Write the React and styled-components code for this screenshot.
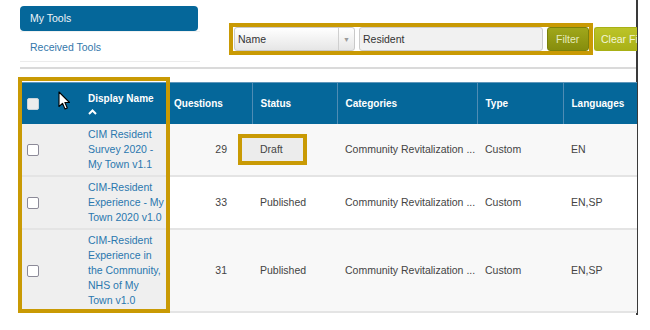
import React from "react";
import styled, { createGlobalStyle } from "styled-components";

const Global = createGlobalStyle`
  html, body { margin: 0; padding: 0; background: #fff; }
  body { font-family: "Liberation Sans", Arial, sans-serif; }
  * { box-sizing: border-box; }
`;

const GOLD = "#c99a04";
const BLUE = "#05679a";

const Frame = styled.div`
  width: 638px;
  padding-left: 20px;
  padding-bottom: 2px;
  border-right: 2px solid #3a3a3a;
`;

const TopArea = styled.div`
  display: flex;
  align-items: flex-start;
  height: 69px;
  border-bottom: 2px solid #dadada;
`;

const Nav = styled.div`
  width: 180px;
  padding-top: 6px;
  display: flex;
  flex-direction: column;
`;

const NavItem = styled.div`
  height: ${(p) => (p.$active ? 25 : 31)}px;
  line-height: ${(p) => (p.$active ? 25 : 31)}px;
  padding-left: 10px;
  font-size: 10.5px;
  border-radius: ${(p) => (p.$active ? "4px" : "0")};
  background: ${(p) => (p.$active ? BLUE : "transparent")};
  color: ${(p) => (p.$active ? "#eef4f8" : "#3377aa")};
  border-top: ${(p) => (p.$active ? "none" : "1px solid #f1f1f1")};
  border-bottom: ${(p) => (p.$active ? "none" : "1px solid #ececec")};
  width: ${(p) => (p.$active ? "178px" : "180px")};
`;

const FilterRow = styled.div`
  display: flex;
  align-items: center;
  gap: 1px;
  margin-left: 29px;
  margin-top: 23px;
`;

const Highlight = styled.div`
  display: flex;
  align-items: center;
  gap: 4px;
  border: 4px solid ${GOLD};
  padding-left: 1px;
  height: 32px;
`;

const Select = styled.div`
  width: 121px;
  height: 24px;
  display: flex;
  border: 1px solid #c9c9c9;
  border-radius: 3px;
  background: linear-gradient(#ffffff, #e6e6e6);
  font-size: 10.5px;
  color: #333;
`;

const SelectText = styled.div`
  flex: 1;
  line-height: 22px;
  padding-left: 3px;
`;

const SelectArrow = styled.div`
  width: 16px;
  border-left: 1px solid #cfcfcf;
  display: flex;
  align-items: center;
  justify-content: center;
  color: #9a9a9a;
  font-size: 7px;
`;

const Input = styled.div`
  width: 184px;
  height: 24px;
  border: 1px solid #cccccc;
  border-radius: 3px;
  background: #f1f1f1;
  line-height: 22px;
  padding-left: 3px;
  font-size: 10.5px;
  color: #333;
`;

const Button = styled.div`
  height: 24px;
  line-height: 22px;
  font-size: 10.5px;
  white-space: nowrap;
  overflow: hidden;
  width: ${(p) => p.$w}px;
  padding-left: ${(p) => p.$pl}px;
  color: ${(p) => (p.$light ? "#f2f5d6" : "#e6ebbf")};
  background: ${(p) =>
    p.$light
      ? "linear-gradient(#bcc428, #a9b117)"
      : "linear-gradient(#a0a71b, #868d0d)"};
  border: 1px solid ${(p) => (p.$light ? "#a8b015" : "#7b820b")};
  border-right-width: ${(p) => (p.$light ? "0" : "1px")};
  border-radius: ${(p) => (p.$light ? "3px 0 0 3px" : "3px")};
`;

const TableWrap = styled.div`
  position: relative;
  margin-top: 13px;
  width: 617px;
`;

const Table = styled.table`
  width: 617px;
  border-collapse: collapse;
  table-layout: fixed;
`;

const Th = styled.th`
  background: ${BLUE};
  color: #fff;
  font-size: 10px;
  font-weight: bold;
  text-align: left;
  height: 41px;
  padding: 0 0 0 ${(p) => p.$pl ?? 8}px;
  border-top: 1px solid #5f97bb;
  border-left: ${(p) => (p.$sep ? "1px solid #4f8cb4" : "none")};
  vertical-align: middle;
  line-height: 15px;
`;

const Tr = styled.tr`
  background: ${(p) => (p.$alt ? "#f8f8f8" : "#ffffff")};
  border-bottom: 2px solid #e4e4e4;
`;

const Td = styled.td`
  font-size: 10.5px;
  line-height: 15px;
  color: #444;
  padding: 3px ${(p) => p.$pr ?? 8}px 3px ${(p) => p.$pl ?? 8}px;
  vertical-align: middle;
  text-align: ${(p) => p.$align || "left"};
  background: ${(p) => (p.$hl ? "#efefef" : "transparent")};
  white-space: ${(p) => (p.$nowrap ? "nowrap" : "normal")};
`;

const Link = styled.span`
  color: #2a77ae;
`;

const NameLine = styled.span`
  display: block;
  white-space: nowrap;
`;

const Check = styled.span`
  display: inline-block;
  width: 12px;
  height: 12px;
  border: 1.5px solid ${(p) => (p.$head ? "#c8d4dc" : "#8c8a98")};
  border-radius: 2px;
  background: ${(p) => (p.$head ? "#ececec" : "#fff")};
  vertical-align: middle;
  margin-left: 7px;
`;

const DraftBox = styled.span`
  display: inline-block;
  margin-left: -22px;
  border: 4px solid ${GOLD};
  background: #ececec;
  padding: 4px 20px 4px 18px;
  line-height: 15px;
`;

const ColumnBox = styled.div`
  position: absolute;
  left: -2px;
  top: -5px;
  width: 152px;
  height: 236px;
  border: 4px solid ${GOLD};
  pointer-events: none;
`;

const Cursor = styled.svg`
  position: absolute;
  left: 38px;
  top: 9px;
`;

const Caret = styled.svg`
  display: block;
  margin-top: 3px;
`;

const rows = [
  { name: ["CIM Resident", "Survey 2020 -", "My Town v1.1"], q: 29, status: "Draft", langs: "EN", alt: true },
  { name: ["CIM-Resident", "Experience - My", "Town 2020 v1.0"], q: 33, status: "Published", langs: "EN,SP", alt: false },
  { name: ["CIM-Resident", "Experience in", "the Community,", "NHS of My", "Town v1.0"], q: 31, status: "Published", langs: "EN,SP", alt: true },
];

export default function App() {
  return (
    <>
      <Global />
      <Frame>
        <TopArea>
          <Nav>
            <NavItem $active>My Tools</NavItem>
            <NavItem>Received Tools</NavItem>
          </Nav>
          <FilterRow>
            <Highlight>
              <Select>
                <SelectText>Name</SelectText>
                <SelectArrow>▼</SelectArrow>
              </Select>
              <Input>Resident</Input>
              <Button $w={42} $pl={8}>Filter</Button>
            </Highlight>
            <Button $light $w={43} $pl={6}>Clear Filter</Button>
          </FilterRow>
        </TopArea>
        <TableWrap>
          <Table>
            <colgroup>
              <col style={{ width: 62 }} />
              <col style={{ width: 86 }} />
              <col style={{ width: 84 }} />
              <col style={{ width: 85 }} />
              <col style={{ width: 140 }} />
              <col style={{ width: 86 }} />
              <col style={{ width: 74 }} />
            </colgroup>
            <thead>
              <tr>
                <Th $pl={0}><Check $head /></Th>
                <Th $pl={6}>
                  Display Name
                  <Caret width="9" height="6" viewBox="0 0 9 6">
                    <path d="M1 5 L4.5 1.5 L8 5" fill="none" stroke="#fff" strokeWidth="2" />
                  </Caret>
                </Th>
                <Th $pl={6}>Questions</Th>
                <Th $sep>Status</Th>
                <Th $sep>Categories</Th>
                <Th $sep>Type</Th>
                <Th $sep>Languages</Th>
              </tr>
            </thead>
            <tbody>
              {rows.map((r) => (
                <Tr key={r.name.join(" ")} $alt={r.alt}>
                  <Td $hl $pl={0}><Check /></Td>
                  <Td $hl $pl={6} $pr={0}>
                    <Link>
                      {r.name.map((l) => (
                        <NameLine key={l}>{l}</NameLine>
                      ))}
                    </Link>
                  </Td>
                  <Td $align="right" $pr={25}>{r.q}</Td>
                  <Td>{r.status === "Draft" ? <DraftBox>Draft</DraftBox> : r.status}</Td>
                  <Td $nowrap>Community Revitalization ...</Td>
                  <Td>Custom</Td>
                  <Td>{r.langs}</Td>
                </Tr>
              ))}
            </tbody>
          </Table>
          <ColumnBox />
          <Cursor width="13" height="19" viewBox="0 0 13 19">
            <path d="M1 1 L1 15.5 L4.5 12.3 L7 18 L9.3 17 L6.9 11.5 L11.5 11.5 Z" fill="#fff" stroke="#000" strokeWidth="1.1" strokeLinejoin="round" />
          </Cursor>
        </TableWrap>
      </Frame>
    </>
  );
}
